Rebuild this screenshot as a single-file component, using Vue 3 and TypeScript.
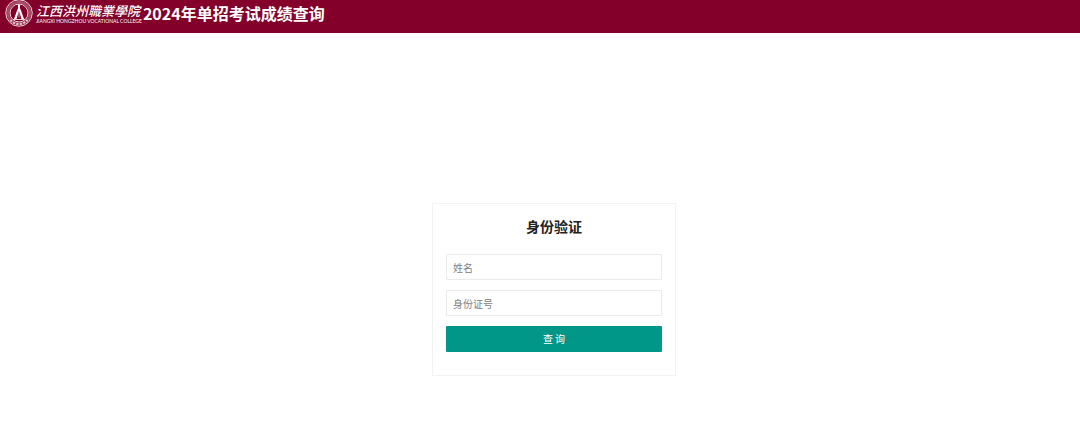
<script setup lang="ts">
import { ref } from 'vue'

const name = ref('')
const idNumber = ref('')
</script>

<template>
  <div class="page">
    <header class="bar">
      <div class="brand">
        <svg class="emblem" viewBox="0 0 56 56" aria-hidden="true">
          <g fill="none" stroke="#fff">
            <circle cx="28" cy="28" r="26.5" stroke-width="2" opacity="0.85" />
            <circle cx="28" cy="28" r="22" stroke-width="5" opacity="0.3" />
            <path d="M11 42a22 22 0 0 0 34 0" stroke-width="4" stroke-dasharray="4 3" opacity="0.7" />
            <circle cx="28" cy="28" r="18" stroke-width="2" opacity="0.85" />
          </g>
          <path d="M26 11h4v8l2 4 6 17h-5l-5-16-5 16h-5l6-17 2-4z" fill="#fff" />
          <path d="M28 27v10" stroke="#fff" stroke-width="2" opacity="0.6" />
          <path d="M16 41h24" stroke="#fff" stroke-width="2" opacity="0.8" />
        </svg>
        <div class="school">
          <span class="school-cn">江西洪州職業學院</span>
          <span class="school-en">JIANGXI HONGZHOU VOCATIONAL COLLEGE</span>
        </div>
      </div>
      <h1 class="title">2024年单招考试成绩查询</h1>
    </header>

    <main class="content">
      <form class="card" @submit.prevent>
        <h2 class="heading">身份验证</h2>
        <input v-model="name" class="field" type="text" placeholder="姓名" aria-label="姓名" />
        <input v-model="idNumber" class="field" type="text" placeholder="身份证号" aria-label="身份证号" />
        <button class="submit" type="submit">查 询</button>
      </form>
    </main>
  </div>
</template>

<style>
body {
  background: #fff;
}
</style>

<style scoped>
.page {
  min-height: 100vh;
  display: flex;
  flex-direction: column;
  font-family: "Noto Sans CJK SC", "Noto Sans", sans-serif;
  color: #222;
}

.bar {
  display: flex;
  align-items: center;
  gap: 1px;
  height: 33px;
  box-sizing: border-box;
  padding: 0 5px 7px;
  background: #82002a;
  color: #fff;
}

.brand {
  display: flex;
  align-items: center;
  gap: 3px;
}

.emblem {
  width: 28px;
  height: 28px;
  flex: none;
}

.school {
  display: flex;
  flex-direction: column;
  white-space: nowrap;
}

.school-cn {
  font-family: "Noto Sans CJK TC", "Noto Sans CJK SC", sans-serif;
  font-size: 13px;
  line-height: 15px;
  font-style: italic;
  font-weight: 500;
}

.school-en {
  font-family: Lato, "Liberation Sans", sans-serif;
  font-size: 5px;
  line-height: 6px;
}

.title {
  margin: 0;
  font-size: 16px;
  line-height: 24px;
  font-weight: 700;
  white-space: nowrap;
}

.content {
  flex: 1;
  display: flex;
  flex-direction: column;
  align-items: center;
  padding: 170px 0 24px 28px;
}

.card {
  box-sizing: border-box;
  width: 244px;
  max-width: 100%;
  display: flex;
  flex-direction: column;
  gap: 10px;
  padding: 11px 13px 23px;
  border: 1px solid #f2f2f2;
}

.heading {
  margin: 0 0 7px;
  font-size: 14px;
  line-height: 22px;
  font-weight: 700;
  text-align: center;
}

.field,
.submit {
  box-sizing: border-box;
  width: 100%;
  height: 26px;
  margin: 0;
  border-radius: 1px;
  font-family: inherit;
  font-size: 10px;
  line-height: 16px;
}

.field {
  padding: 0 6px;
  border: 1px solid #eaeaea;
  background: #fff;
  color: #333;
}

.field::placeholder {
  color: #808080;
  opacity: 1;
}

.submit {
  padding: 0;
  border: 0;
  background: #009688;
  color: #fff;
  cursor: pointer;
}
</style>
